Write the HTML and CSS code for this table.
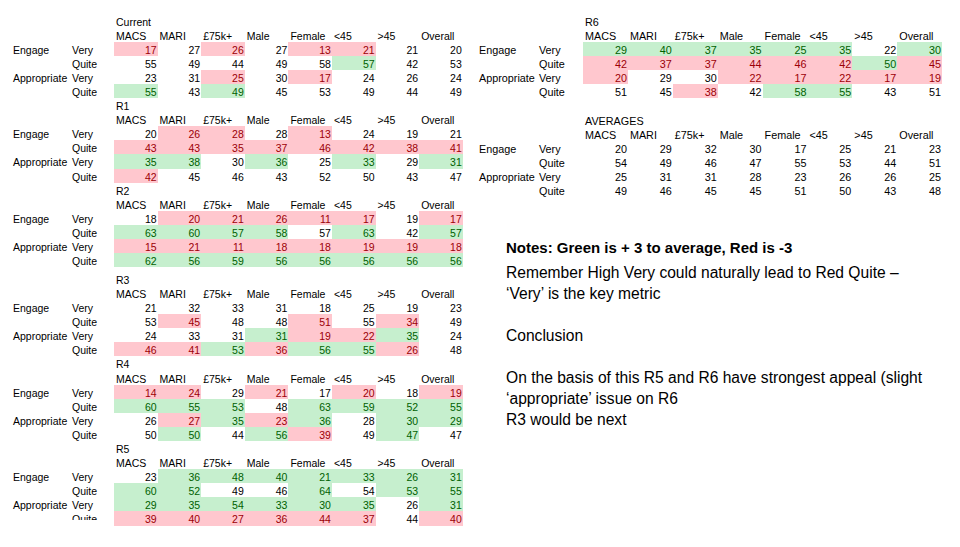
FILE: index.html
```html
<!DOCTYPE html>
<html lang="en">
<head>
<meta charset="utf-8">
<title>Rating comparison</title>
<link rel="stylesheet" href="styles.css">
</head>
<body>
<div class="page">
  <div class="col left">
    <section class="tbl">
      <div class="ttl">Current</div>
      <div class="h first">MACS</div><div class="h">MARI</div><div class="h">£75k+</div><div class="h">Male</div><div class="h">Female</div><div class="h">&lt;45</div><div class="h">&gt;45</div><div class="h">Overall</div>
      <div class="l1">Engage</div><div class="l2">Very</div><div class="n r">17</div><div class="n">27</div><div class="n r">26</div><div class="n">27</div><div class="n r">13</div><div class="n r">21</div><div class="n">21</div><div class="n">20</div>
      <div class="l1"></div><div class="l2">Quite</div><div class="n">55</div><div class="n">49</div><div class="n">44</div><div class="n">49</div><div class="n">58</div><div class="n g">57</div><div class="n">42</div><div class="n">53</div>
      <div class="l1">Appropriate</div><div class="l2">Very</div><div class="n">23</div><div class="n">31</div><div class="n r">25</div><div class="n">30</div><div class="n r">17</div><div class="n">24</div><div class="n">26</div><div class="n">24</div>
      <div class="l1"></div><div class="l2">Quite</div><div class="n g">55</div><div class="n">43</div><div class="n g">49</div><div class="n">45</div><div class="n">53</div><div class="n">49</div><div class="n">44</div><div class="n">49</div>
    </section>
    <section class="tbl">
      <div class="ttl">R1</div>
      <div class="h first">MACS</div><div class="h">MARI</div><div class="h">£75k+</div><div class="h">Male</div><div class="h">Female</div><div class="h">&lt;45</div><div class="h">&gt;45</div><div class="h">Overall</div>
      <div class="l1">Engage</div><div class="l2">Very</div><div class="n">20</div><div class="n r">26</div><div class="n r">28</div><div class="n">28</div><div class="n r">13</div><div class="n">24</div><div class="n">19</div><div class="n">21</div>
      <div class="l1"></div><div class="l2">Quite</div><div class="n r">43</div><div class="n r">43</div><div class="n r">35</div><div class="n r">37</div><div class="n r">46</div><div class="n r">42</div><div class="n r">38</div><div class="n r">41</div>
      <div class="l1">Appropriate</div><div class="l2">Very</div><div class="n g">35</div><div class="n g">38</div><div class="n">30</div><div class="n g">36</div><div class="n">25</div><div class="n g">33</div><div class="n">29</div><div class="n g">31</div>
      <div class="l1"></div><div class="l2">Quite</div><div class="n r">42</div><div class="n">45</div><div class="n">46</div><div class="n">43</div><div class="n">52</div><div class="n">50</div><div class="n">43</div><div class="n">47</div>
    </section>
    <section class="tbl">
      <div class="ttl">R2</div>
      <div class="h first">MACS</div><div class="h">MARI</div><div class="h">£75k+</div><div class="h">Male</div><div class="h">Female</div><div class="h">&lt;45</div><div class="h">&gt;45</div><div class="h">Overall</div>
      <div class="l1">Engage</div><div class="l2">Very</div><div class="n">18</div><div class="n r">20</div><div class="n r">21</div><div class="n r">26</div><div class="n r">11</div><div class="n r">17</div><div class="n">19</div><div class="n r">17</div>
      <div class="l1"></div><div class="l2">Quite</div><div class="n g">63</div><div class="n g">60</div><div class="n g">57</div><div class="n g">58</div><div class="n">57</div><div class="n g">63</div><div class="n">42</div><div class="n g">57</div>
      <div class="l1">Appropriate</div><div class="l2">Very</div><div class="n r">15</div><div class="n r">21</div><div class="n r">11</div><div class="n r">18</div><div class="n r">18</div><div class="n r">19</div><div class="n r">19</div><div class="n r">18</div>
      <div class="l1"></div><div class="l2">Quite</div><div class="n g">62</div><div class="n g">56</div><div class="n g">59</div><div class="n g">56</div><div class="n g">56</div><div class="n g">56</div><div class="n g">56</div><div class="n g">56</div>
    </section>
    <section class="tbl gap-r3">
      <div class="ttl">R3</div>
      <div class="h first">MACS</div><div class="h">MARI</div><div class="h">£75k+</div><div class="h">Male</div><div class="h">Female</div><div class="h">&lt;45</div><div class="h">&gt;45</div><div class="h">Overall</div>
      <div class="l1">Engage</div><div class="l2">Very</div><div class="n">21</div><div class="n">32</div><div class="n">33</div><div class="n">31</div><div class="n">18</div><div class="n">25</div><div class="n">19</div><div class="n">23</div>
      <div class="l1"></div><div class="l2">Quite</div><div class="n">53</div><div class="n r">45</div><div class="n">48</div><div class="n">48</div><div class="n r">51</div><div class="n">55</div><div class="n r">34</div><div class="n">49</div>
      <div class="l1">Appropriate</div><div class="l2">Very</div><div class="n">24</div><div class="n">33</div><div class="n">31</div><div class="n g">31</div><div class="n r">19</div><div class="n r">22</div><div class="n g">35</div><div class="n">24</div>
      <div class="l1"></div><div class="l2">Quite</div><div class="n r">46</div><div class="n r">41</div><div class="n g">53</div><div class="n r">36</div><div class="n g">56</div><div class="n g">55</div><div class="n r">26</div><div class="n">48</div>
    </section>
    <section class="tbl">
      <div class="ttl">R4</div>
      <div class="h first">MACS</div><div class="h">MARI</div><div class="h">£75k+</div><div class="h">Male</div><div class="h">Female</div><div class="h">&lt;45</div><div class="h">&gt;45</div><div class="h">Overall</div>
      <div class="l1">Engage</div><div class="l2">Very</div><div class="n r">14</div><div class="n r">24</div><div class="n">29</div><div class="n r">21</div><div class="n">17</div><div class="n r">20</div><div class="n">18</div><div class="n r">19</div>
      <div class="l1"></div><div class="l2">Quite</div><div class="n g">60</div><div class="n g">55</div><div class="n g">53</div><div class="n">48</div><div class="n g">63</div><div class="n g">59</div><div class="n g">52</div><div class="n g">55</div>
      <div class="l1">Appropriate</div><div class="l2">Very</div><div class="n">26</div><div class="n r">27</div><div class="n g">35</div><div class="n r">23</div><div class="n g">36</div><div class="n">28</div><div class="n g">30</div><div class="n g">29</div>
      <div class="l1"></div><div class="l2">Quite</div><div class="n">50</div><div class="n g">50</div><div class="n">44</div><div class="n g">56</div><div class="n r">39</div><div class="n">49</div><div class="n g">47</div><div class="n">47</div>
    </section>
    <section class="tbl">
      <div class="ttl">R5</div>
      <div class="h first">MACS</div><div class="h">MARI</div><div class="h">£75k+</div><div class="h">Male</div><div class="h">Female</div><div class="h">&lt;45</div><div class="h">&gt;45</div><div class="h">Overall</div>
      <div class="l1">Engage</div><div class="l2">Very</div><div class="n">23</div><div class="n g">36</div><div class="n g">48</div><div class="n g">40</div><div class="n g">21</div><div class="n g">33</div><div class="n g">26</div><div class="n g">31</div>
      <div class="l1"></div><div class="l2">Quite</div><div class="n g">60</div><div class="n g">52</div><div class="n">49</div><div class="n">46</div><div class="n g">64</div><div class="n">54</div><div class="n g">53</div><div class="n g">55</div>
      <div class="l1">Appropriate</div><div class="l2">Very</div><div class="n g">29</div><div class="n g">35</div><div class="n g">54</div><div class="n g">33</div><div class="n g">30</div><div class="n g">35</div><div class="n">26</div><div class="n g">31</div>
      <div class="l1"></div><div class="l2 clip">Quite</div><div class="n r">39</div><div class="n r">40</div><div class="n r">27</div><div class="n r">36</div><div class="n r">44</div><div class="n r">37</div><div class="n">44</div><div class="n r">40</div>
    </section>
  </div>

  <div class="col right">
    <section class="tbl wide">
      <div class="ttl">R6</div>
      <div class="h first">MACS</div><div class="h">MARI</div><div class="h">£75k+</div><div class="h">Male</div><div class="h">Female</div><div class="h">&lt;45</div><div class="h">&gt;45</div><div class="h">Overall</div>
      <div class="l1">Engage</div><div class="l2">Very</div><div class="n g">29</div><div class="n g">40</div><div class="n g">37</div><div class="n g">35</div><div class="n g">25</div><div class="n g">35</div><div class="n">22</div><div class="n g">30</div>
      <div class="l1"></div><div class="l2">Quite</div><div class="n r">42</div><div class="n r">37</div><div class="n r">37</div><div class="n r">44</div><div class="n r">46</div><div class="n r">42</div><div class="n g">50</div><div class="n r">45</div>
      <div class="l1">Appropriate</div><div class="l2">Very</div><div class="n r">20</div><div class="n">29</div><div class="n">30</div><div class="n r">22</div><div class="n r">17</div><div class="n r">22</div><div class="n r">17</div><div class="n r">19</div>
      <div class="l1"></div><div class="l2">Quite</div><div class="n">51</div><div class="n">45</div><div class="n r">38</div><div class="n">42</div><div class="n g">58</div><div class="n g">55</div><div class="n">43</div><div class="n">51</div>
    </section>
    <section class="tbl wide gap-avg">
      <div class="ttl">AVERAGES</div>
      <div class="h first">MACS</div><div class="h">MARI</div><div class="h">£75k+</div><div class="h">Male</div><div class="h">Female</div><div class="h">&lt;45</div><div class="h">&gt;45</div><div class="h">Overall</div>
      <div class="l1">Engage</div><div class="l2">Very</div><div class="n">20</div><div class="n">29</div><div class="n">32</div><div class="n">30</div><div class="n">17</div><div class="n">25</div><div class="n">21</div><div class="n">23</div>
      <div class="l1"></div><div class="l2">Quite</div><div class="n">54</div><div class="n">49</div><div class="n">46</div><div class="n">47</div><div class="n">55</div><div class="n">53</div><div class="n">44</div><div class="n">51</div>
      <div class="l1">Appropriate</div><div class="l2">Very</div><div class="n">25</div><div class="n">31</div><div class="n">31</div><div class="n">28</div><div class="n">23</div><div class="n">26</div><div class="n">26</div><div class="n">25</div>
      <div class="l1"></div><div class="l2">Quite</div><div class="n">49</div><div class="n">46</div><div class="n">45</div><div class="n">45</div><div class="n">51</div><div class="n">50</div><div class="n">43</div><div class="n">48</div>
    </section>

    <div class="notes">
      <p class="lead">Notes: Green is + 3 to average, Red is -3</p>
      <p>Remember High Very could naturally lead to Red Quite –<br>‘Very’ is the key metric</p>
      <p class="blank"></p>
      <p>Conclusion</p>
      <p class="blank"></p>
      <p>On the basis of this R5 and R6 have strongest appeal (slight<br>‘appropriate’ issue on R6<br>R3 would be next</p>
    </div>
  </div>
</div>
</body>
</html>
```

FILE: styles.css
```css
html, body {
  margin: 0;
  padding: 0;
  background: #ffffff;
}

body {
  font-family: "Liberation Sans", Arial, sans-serif;
  color: #000000;
  width: 960px;
  height: 547px;
  overflow: hidden;
}

.page {
  display: flex;
  align-items: flex-start;
}

.col {
  box-sizing: border-box;
  padding-top: 13.5px;
}

.left {
  width: 479px;
  padding-left: 13px;
}

.right {
  flex: 1;
}

.tbl {
  display: grid;
  grid-template-columns: 59px 42px repeat(8, 43.6px);
  grid-auto-rows: 14.1px;
  font-size: 10.5px;
  line-height: 14px;
}

.tbl.wide {
  grid-template-columns: 60px 44px repeat(8, 44.9px);
  font-size: 10.8px;
}

.tbl > div {
  padding-top: 1px;
  white-space: nowrap;
}

.ttl {
  grid-column: 3 / -1;
  padding-left: 2px;
}

.h {
  padding-left: 2px;
}

.h.first {
  grid-column-start: 3;
}

.l2.clip {
  height: 8px;
  overflow: hidden;
}

.n {
  text-align: right;
  padding-right: 1px;
}

.n.r {
  background: #ffc7ce;
  color: #9c0006;
}

.n.g {
  background: #c6efce;
  color: #006100;
}

.gap-r3 {
  margin-top: 4.7px;
}

.gap-avg {
  margin-top: 14.7px;
}

.notes {
  margin: 40px 0 0 27px;
  font-size: 15.6px;
  line-height: 21px;
  white-space: nowrap;
}

.notes p {
  margin: 0;
}

.notes .lead {
  font-weight: bold;
  font-size: 15px;
  margin-bottom: 3.4px;
}

.notes .blank {
  height: 21px;
}
```
